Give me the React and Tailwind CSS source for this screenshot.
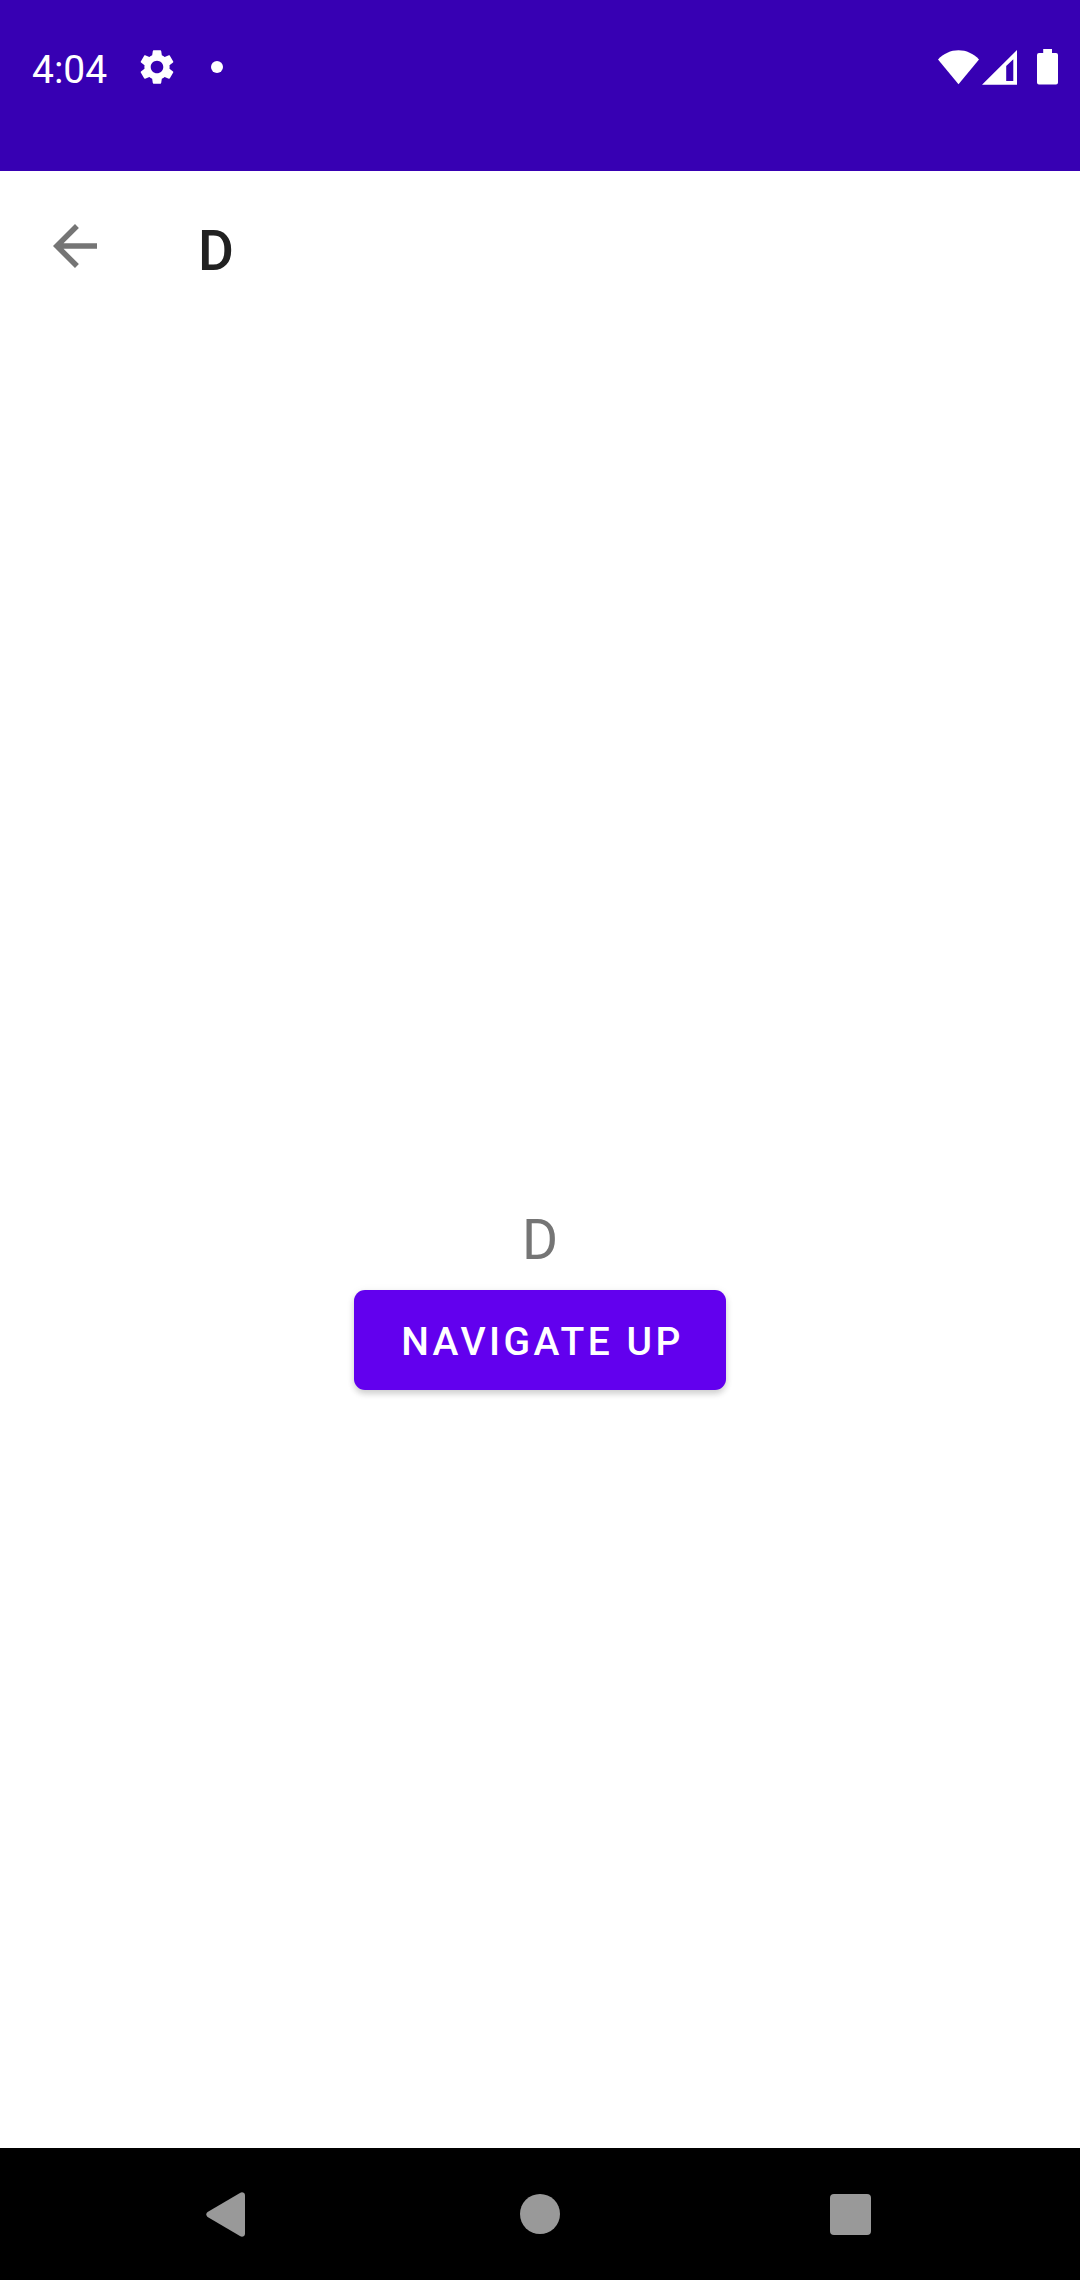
function StatusBar() {
  return (
    <header className="flex h-[171px] items-start justify-between bg-[#3700b3] pl-8 pr-[22px] text-white">
      <div className="flex">
        <span className="mt-12 w-[103.5px] text-[39px] leading-[45px]">4:04</span>
        <svg className="mt-[46.4px] size-[42px] shrink-0" viewBox="0 0 24 24" fill="currentColor">
          <path d="M19.14 12.94c.04-.3.06-.61.06-.94 0-.32-.02-.64-.07-.94l2.03-1.58c.18-.14.23-.41.12-.61l-1.92-3.32c-.12-.22-.37-.29-.59-.22l-2.39.96c-.5-.38-1.03-.7-1.62-.94L14.4 2.81c-.04-.24-.24-.41-.48-.41h-3.84c-.24 0-.43.17-.47.41l-.36 2.54c-.59.24-1.13.57-1.62.94l-2.39-.96c-.22-.08-.47 0-.59.22L2.74 8.87c-.12.21-.08.47.12.61l2.03 1.58c-.05.3-.09.63-.09.94s.02.64.07.94l-2.03 1.58c-.18.14-.23.41-.12.61l1.92 3.32c.12.22.37.29.59.22l2.39-.96c.5.38 1.03.7 1.62.94l.36 2.54c.05.24.24.41.48.41h3.84c.24 0 .44-.17.47-.41l.36-2.54c.59-.24 1.13-.56 1.62-.94l2.39.96c.22.08.47 0 .59-.22l1.92-3.32c.12-.22.07-.47-.12-.61l-2.01-1.58zM12 15.6c-1.98 0-3.6-1.62-3.6-3.6s1.62-3.6 3.6-3.6 3.6 1.62 3.6 3.6-1.62 3.6-3.6 3.6z" />
        </svg>
        <span className="ml-[33.5px] mt-[61px] size-3 rounded-full bg-white" />
      </div>
      <div className="mt-[49px] flex">
        <svg className="h-9 w-[41px]" viewBox="0 0 41 36" fill="currentColor">
          <path d="M0 10.4C5.6 4.6 12.7 1.3 20.5 1.3S35.4 4.6 41 10.4L20.5 35.3Z" />
        </svg>
        <svg className="ml-[3px] h-9 w-[35px]" viewBox="0 0 35 36" fill="currentColor" fillRule="evenodd">
          <path d="M35 1V35.7H0ZM24.2 17V32H31.300V10.200Z" />
        </svg>
        <svg className="ml-5 h-9 w-[21px]" viewBox="0 0 21 36" fill="currentColor">
          <path d="M6.2 0H15V4H19Q21 4 21 6V33.5Q21 35.5 19 35.5H2Q0 35.5 0 33.5V6Q0 4 2 4H6.2Z" />
        </svg>
      </div>
    </header>
  );
}

function Toolbar() {
  return (
    <div className="flex h-[154px] items-start pl-[42px]">
      <svg className="mt-[42px] size-[66px] text-[#757575]" viewBox="0 0 24 24" fill="currentColor">
        <path d="M20 11H7.83l5.59-5.59L12 4l-8 8 8 8 1.41-1.41L7.83 13H20v-2z" />
      </svg>
      <h1 className="ml-[90px] mt-12 text-[55px] font-medium leading-[64px] text-[#212121]">D</h1>
    </div>
  );
}

function NavigationBar() {
  return (
    <nav className="flex h-[132px] items-start bg-black pl-[206px] text-[#999999]">
      <svg className="mt-11 h-[45px] w-[39px]" viewBox="0 0 39 45" fill="currentColor">
        <path d="M34.4 .7Q36-.2 37.7 .7Q39 1.5 39 3.2V41.8Q39 43.5 37.7 44.3Q36 45.2 34.4 44.3L1.6 24.9Q.3 24 .3 22.5T1.6 20.1Z" />
      </svg>
      <span className="ml-[275px] mt-[46px] size-10 rounded-full bg-current" />
      <span className="ml-[270px] mt-[46px] size-[41px] rounded-[4px] bg-current" />
    </nav>
  );
}

export default function App() {
  return (
    <div className="flex h-[2280px] w-[1080px] flex-col overflow-hidden bg-white font-[Roboto,sans-serif]">
      <StatusBar />
      <Toolbar />
      <main className="flex flex-1 flex-col items-center pt-[883px]">
        <p className="text-[55px] leading-[64px] text-[#757575]">D</p>
        <button className="mt-[18px] flex h-[100px] w-[372px] items-start justify-center rounded-[11px] bg-[#6200ee] pl-[5px] pt-[30px] text-[39px] font-medium uppercase leading-[45px] tracking-[0.0892857em] text-white shadow-[0_4px_6px_rgba(0,0,0,0.16),0_1px_10px_rgba(0,0,0,0.06)]">
          <span className="whitespace-nowrap">Navigate up</span>
        </button>
      </main>
      <NavigationBar />
    </div>
  );
}
